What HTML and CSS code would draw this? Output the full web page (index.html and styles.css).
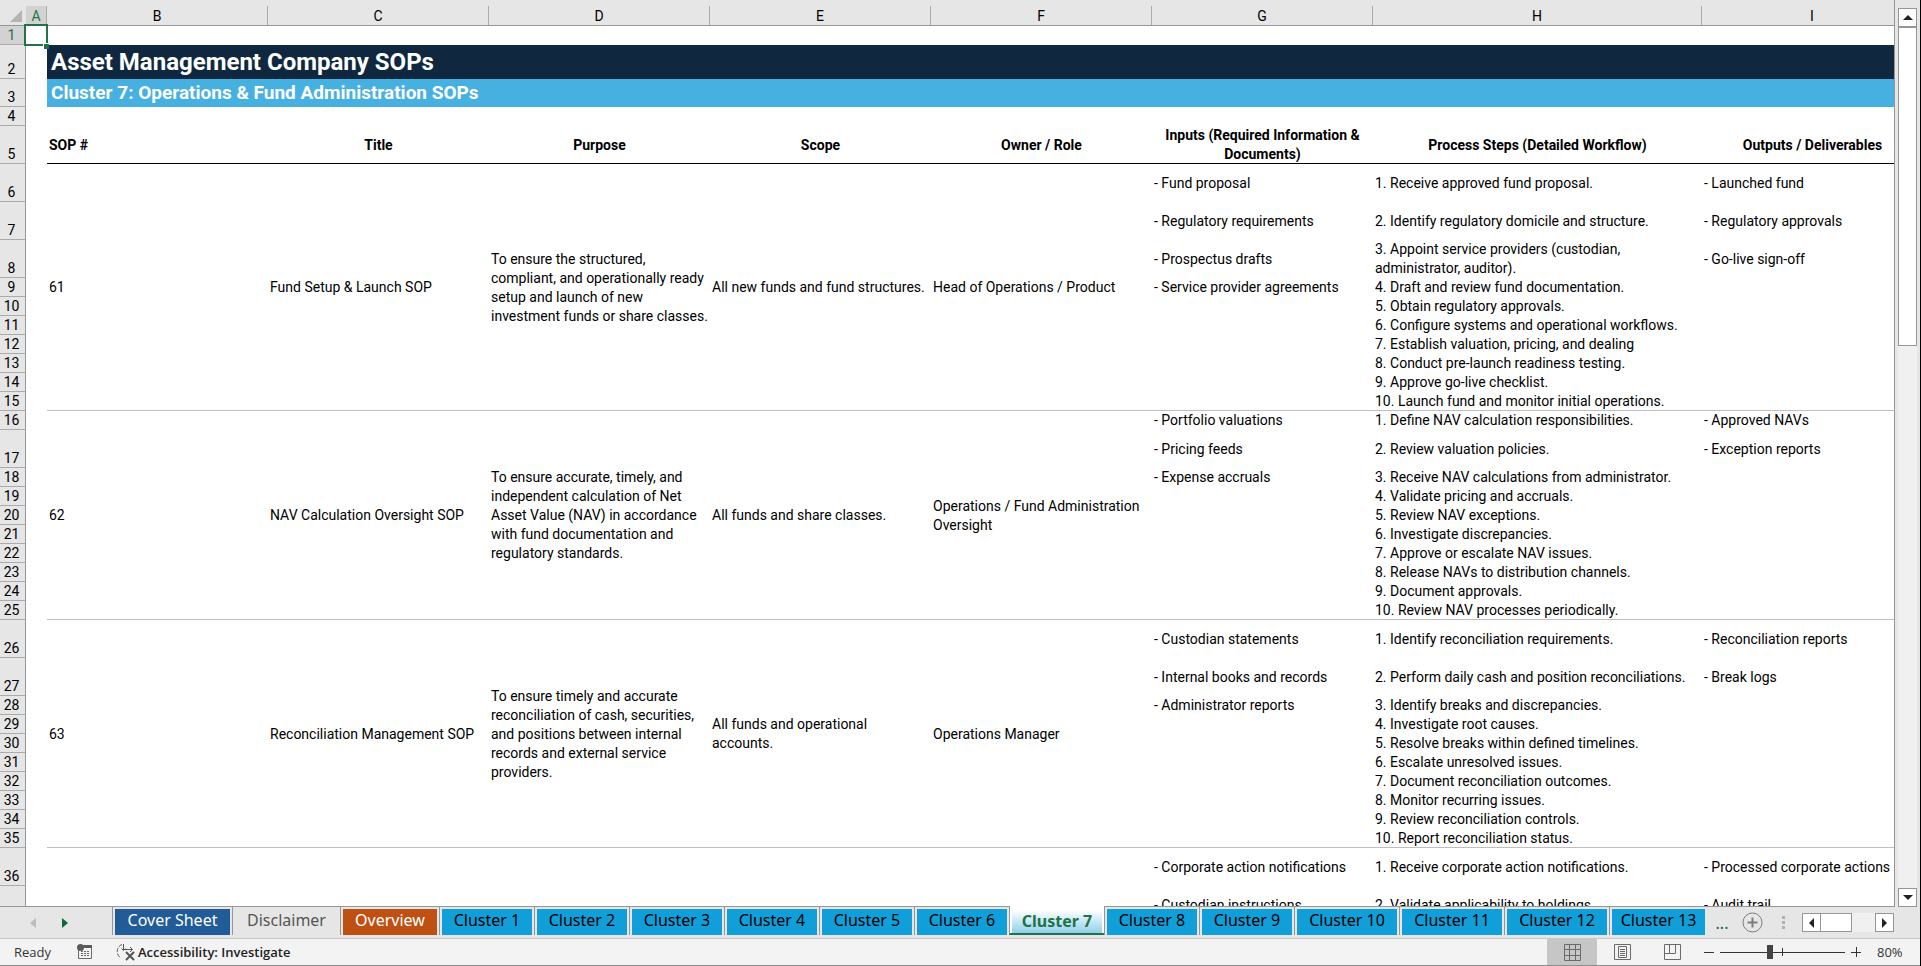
FILE: index.html
```html
<!DOCTYPE html>
<html lang="en">
<head>
<meta charset="utf-8">
<title>Asset Management Company SOPs</title>
<link rel="stylesheet" href="styles.css">
</head>
<body>
<div class="app">
	<div class="work">
		<div class="grid">
			<table class="sheet">
				<colgroup>
					<col class="col-num">
					<col class="col-a">
					<col class="col-std"><col class="col-std"><col class="col-std"><col class="col-std"><col class="col-std"><col class="col-std">
					<col class="col-steps">
					<col class="col-std">
				</colgroup>
				<thead>
					<tr>
						<th class="corner"><svg width="12" height="12" viewBox="0 0 12 12"><path d="M12 0v12H0z" fill="#b4b4b4"/></svg></th>
						<th class="on"><span>A</span></th>
						<th><span>B</span></th><th><span>C</span></th><th><span>D</span></th><th><span>E</span></th><th><span>F</span></th><th><span>G</span></th><th><span>H</span></th><th><span>I</span></th>
					</tr>
				</thead>
				<tbody>
					<tr><th class="on">1</th><td class="cursor"></td><td colspan="8"></td></tr>
					<tr class="title"><th>2</th><td></td><td class="band" colspan="8">Asset Management Company SOPs</td></tr>
					<tr class="subtitle"><th>3</th><td></td><td class="band" colspan="8">Cluster 7: Operations &amp; Fund Administration SOPs</td></tr>
					<tr><th>4</th><td></td><td colspan="8"></td></tr>
					<tr class="tall heads"><th>5</th><td></td><td class="first">SOP #</td><td>Title</td><td>Purpose</td><td>Scope</td><td>Owner / Role</td><td>Inputs (Required Information &amp; Documents)</td><td>Process Steps (Detailed Workflow)</td><td>Outputs / Deliverables</td></tr>

					<tr class="tall"><th>6</th><td></td>
						<td class="m" rowspan="10">61</td>
						<td class="m" rowspan="10">Fund Setup &amp; Launch SOP</td>
						<td class="m" rowspan="10">To ensure the structured,<br>compliant, and operationally ready<br>setup and launch of new<br>investment funds or share classes.</td>
						<td class="m" rowspan="10">All new funds and fund structures.</td>
						<td class="m" rowspan="10">Head of Operations / Product</td>
						<td>- Fund proposal</td><td>1. Receive approved fund proposal.</td><td>- Launched fund</td></tr>
					<tr class="tall"><th>7</th><td></td><td>- Regulatory requirements</td><td>2. Identify regulatory domicile and structure.</td><td>- Regulatory approvals</td></tr>
					<tr class="tall"><th>8</th><td></td><td>- Prospectus drafts</td><td>3. Appoint service providers (custodian,<br>administrator, auditor).</td><td>- Go-live sign-off</td></tr>
					<tr><th>9</th><td></td><td>- Service provider agreements</td><td>4. Draft and review fund documentation.</td><td></td></tr>
					<tr><th>10</th><td></td><td></td><td>5. Obtain regulatory approvals.</td><td></td></tr>
					<tr><th>11</th><td></td><td></td><td>6. Configure systems and operational workflows.</td><td></td></tr>
					<tr><th>12</th><td></td><td></td><td>7. Establish valuation, pricing, and dealing</td><td></td></tr>
					<tr><th>13</th><td></td><td></td><td>8. Conduct pre-launch readiness testing.</td><td></td></tr>
					<tr><th>14</th><td></td><td></td><td>9. Approve go-live checklist.</td><td></td></tr>
					<tr class="last"><th>15</th><td></td><td></td><td>10. Launch fund and monitor initial operations.</td><td></td></tr>

					<tr><th>16</th><td></td>
						<td class="m" rowspan="10">62</td>
						<td class="m" rowspan="10">NAV Calculation Oversight SOP</td>
						<td class="m" rowspan="10">To ensure accurate, timely, and<br>independent calculation of Net<br>Asset Value (NAV) in accordance<br>with fund documentation and<br>regulatory standards.</td>
						<td class="m" rowspan="10">All funds and share classes.</td>
						<td class="m" rowspan="10">Operations / Fund Administration<br>Oversight</td>
						<td>- Portfolio valuations</td><td>1. Define NAV calculation responsibilities.</td><td>- Approved NAVs</td></tr>
					<tr class="tall"><th>17</th><td></td><td>- Pricing feeds</td><td>2. Review valuation policies.</td><td>- Exception reports</td></tr>
					<tr><th>18</th><td></td><td>- Expense accruals</td><td>3. Receive NAV calculations from administrator.</td><td></td></tr>
					<tr><th>19</th><td></td><td></td><td>4. Validate pricing and accruals.</td><td></td></tr>
					<tr><th>20</th><td></td><td></td><td>5. Review NAV exceptions.</td><td></td></tr>
					<tr><th>21</th><td></td><td></td><td>6. Investigate discrepancies.</td><td></td></tr>
					<tr><th>22</th><td></td><td></td><td>7. Approve or escalate NAV issues.</td><td></td></tr>
					<tr><th>23</th><td></td><td></td><td>8. Release NAVs to distribution channels.</td><td></td></tr>
					<tr><th>24</th><td></td><td></td><td>9. Document approvals.</td><td></td></tr>
					<tr class="last"><th>25</th><td></td><td></td><td>10. Review NAV processes periodically.</td><td></td></tr>

					<tr class="tall"><th>26</th><td></td>
						<td class="m" rowspan="10">63</td>
						<td class="m" rowspan="10">Reconciliation Management SOP</td>
						<td class="m" rowspan="10">To ensure timely and accurate<br>reconciliation of cash, securities,<br>and positions between internal<br>records and external service<br>providers.</td>
						<td class="m" rowspan="10">All funds and operational<br>accounts.</td>
						<td class="m" rowspan="10">Operations Manager</td>
						<td>- Custodian statements</td><td>1. Identify reconciliation requirements.</td><td>- Reconciliation reports</td></tr>
					<tr class="tall"><th>27</th><td></td><td>- Internal books and records</td><td>2. Perform daily cash and position reconciliations.</td><td>- Break logs</td></tr>
					<tr><th>28</th><td></td><td>- Administrator reports</td><td>3. Identify breaks and discrepancies.</td><td></td></tr>
					<tr><th>29</th><td></td><td></td><td>4. Investigate root causes.</td><td></td></tr>
					<tr><th>30</th><td></td><td></td><td>5. Resolve breaks within defined timelines.</td><td></td></tr>
					<tr><th>31</th><td></td><td></td><td>6. Escalate unresolved issues.</td><td></td></tr>
					<tr><th>32</th><td></td><td></td><td>7. Document reconciliation outcomes.</td><td></td></tr>
					<tr><th>33</th><td></td><td></td><td>8. Monitor recurring issues.</td><td></td></tr>
					<tr><th>34</th><td></td><td></td><td>9. Review reconciliation controls.</td><td></td></tr>
					<tr class="last"><th>35</th><td></td><td></td><td>10. Report reconciliation status.</td><td></td></tr>

					<tr class="tall"><th>36</th><td></td><td></td><td></td><td></td><td></td><td></td><td>- Corporate action notifications</td><td>1. Receive corporate action notifications.</td><td>- Processed corporate actions</td></tr>
					<tr class="tall"><th></th><td></td><td></td><td></td><td></td><td></td><td></td><td>- Custodian instructions</td><td>2. Validate applicability to holdings.</td><td>- Audit trail</td></tr>
				</tbody>
			</table>
		</div>
		<div class="vscroll">
			<button class="arrow" aria-label="Scroll up"><svg width="10" height="5" viewBox="0 0 10 5"><path d="M5 0l5 5H0z"/></svg></button>
			<div class="vtrack"><div class="vthumb"></div></div>
			<button class="arrow" aria-label="Scroll down"><svg width="10" height="5" viewBox="0 0 10 5"><path d="M0 0h10L5 5z"/></svg></button>
		</div>
	</div>

	<div class="tabbar">
		<div class="nav">
			<button aria-label="Previous sheet"><svg width="6" height="10" viewBox="0 0 6 10"><path d="M6 0v10L0 5z" fill="#bdbdbd"/></svg></button>
			<button aria-label="Next sheet"><svg width="6" height="10" viewBox="0 0 6 10"><path d="M0 0v10l6-5z" fill="#0e6837"/></svg></button>
		</div>
		<div class="tabs">
			<button class="tab cover"><span>Cover Sheet</span></button>
			<button class="tab plain"><span>Disclaimer</span></button>
			<button class="tab overview"><span>Overview</span></button>
			<button class="tab"><span>Cluster 1</span></button>
			<button class="tab"><span>Cluster 2</span></button>
			<button class="tab"><span>Cluster 3</span></button>
			<button class="tab"><span>Cluster 4</span></button>
			<button class="tab"><span>Cluster 5</span></button>
			<button class="tab"><span>Cluster 6</span></button>
			<button class="tab active"><span>Cluster 7</span></button>
			<button class="tab"><span>Cluster 8</span></button>
			<button class="tab"><span>Cluster 9</span></button>
			<button class="tab wide"><span>Cluster 10</span></button>
			<button class="tab wide"><span>Cluster 11</span></button>
			<button class="tab wide"><span>Cluster 12</span></button>
			<button class="tab cut"><span>Cluster 13</span></button>
		</div>
		<button class="more">...</button>
		<button class="add" aria-label="New sheet"><svg width="21" height="21" viewBox="0 0 21 21" fill="none" stroke="#7d7d7d"><circle cx="10.5" cy="10.5" r="9.5"/><path d="M10.5 5.500v10M5.500 10.500h10" stroke-width="2"/></svg></button>
		<svg class="grip" width="3" height="14" viewBox="0 0 3 14" fill="#b0b0b0"><path d="M0 0h3v3H0zM0 5h3v3H0zM0 10h3v3H0z"/></svg>
		<div class="hscroll">
			<button class="arrow" aria-label="Scroll left"><svg width="5" height="10" viewBox="0 0 5 10"><path d="M5 0v10L0 5z"/></svg></button>
			<div class="htrack"><div class="hthumb"></div></div>
			<button class="arrow" aria-label="Scroll right"><svg width="5" height="10" viewBox="0 0 5 10"><path d="M0 0v10l5-5z"/></svg></button>
		</div>
	</div>

	<div class="status">
		<span class="ready">Ready</span>
		<svg class="macro" width="16" height="16" viewBox="0 0 16 16"><path d="M6 1h9v3H6z" fill="#5a5a5a"/><path d="M1.500 6v8.500h13V4" fill="none" stroke="#6a6a6a"/><circle cx="3.500" cy="3.500" r="3.500" fill="#5a5a5a"/><path d="M4 7.500h2M7 7.500h2M10 7.500h2M4 9.500h2M7 9.500h2M10 9.500h2M4 11.500h2M7 11.500h2M10 11.500h2" stroke="#6a6a6a"/></svg>
		<button class="access"><svg width="20" height="18" viewBox="0 0 20 18" fill="none" stroke="#555"><path d="M6 1.500A7.500 7.500 0 0 0 5 15" stroke-dasharray="4 1.500"/><path d="M7.500 1v6M5.500 5.500l2 2 2-2M8 6.500h8M14 4l2.500 2.500L14 9"/><path d="M10 9l8 8M18 9l-8 8" stroke-width="2"/></svg>Accessibility: Investigate</button>
		<div class="views">
			<button class="view on" aria-label="Normal"><svg width="17" height="17" viewBox="0 0 17 17" fill="none" stroke="#6a6a6a"><path d="M.5.5h16v16H.5zM.5 5.500h16M.5 11.500h16M5.500.5v16M11.500.5v16"/></svg></button>
			<button class="view" aria-label="Page layout"><svg width="17" height="16" viewBox="0 0 17 16" fill="none" stroke="#6a6a6a"><path d="M.5.5h16v15H.5zM4.500 2.500h8v11h-8zM6 5.500h5M6 7.500h5M6 9.500h5M6 11.500h5"/></svg></button>
			<button class="view" aria-label="Page break preview"><svg width="17" height="16" viewBox="0 0 17 16" fill="none" stroke="#6a6a6a"><path d="M.5.5h16v15H.5zM5.500.5v9M11.500.5v9M.5 9.500h11"/></svg></button>
		</div>
		<button class="zoom-btn" aria-label="Zoom out"><svg width="10" height="10" viewBox="0 0 10 10" stroke="#333"><path d="M0 5.500h10"/></svg></button>
		<input class="zoom" type="range" min="10" max="190" value="81" aria-label="Zoom">
		<button class="zoom-btn" aria-label="Zoom in"><svg width="10" height="10" viewBox="0 0 10 10" stroke="#333"><path d="M0 5.500h10M5.500 0v10"/></svg></button>
		<span class="percent">80%</span>
	</div>
</div>
</body>
</html>
```

FILE: styles.css
```css
body, table, th, td, button, input {margin:0; padding:0;}
*, :before, :after {box-sizing:border-box;}
button {border:0; background:none; font:inherit; color:inherit;}
svg {display:block;}

body {font-family:Roboto, "Liberation Sans", sans-serif; font-size:14px; color:#000; background:#e6e6e6;}
.app {display:flex; flex-direction:column; height:100vh; overflow:hidden; border-right:1px solid #000;}

/* grid */
.work {display:flex; flex:1; min-height:0;}
.grid {flex:1; min-width:0; overflow:hidden; border-right:1px solid #969696; border-bottom:1px solid #969696;}
.sheet {width:1923px; table-layout:fixed; border-collapse:separate; border-spacing:0; background:#fff;}
.col-num {width:26px;}
.col-a {width:21px;}
.col-std {width:221px;}
.col-steps {width:329px;}

.sheet tr {height:19px;}
.sheet .tall {height:38px;}
.sheet .title {height:34px;}
.sheet .subtitle {height:28px;}
.sheet td {padding:0 2px; line-height:18px; white-space:nowrap; vertical-align:middle;}
.sheet td:not(:empty) {line-height:19px;}

.sheet thead tr {height:26px;}
.sheet thead th {padding-top:6px; background:#e6e6e6; border-bottom:1px solid #969696; font-weight:normal;}
.sheet thead span {display:block; height:19px; line-height:20px; border-right:1px solid #ababab;}
.sheet thead .on span {background:#d2d2d2; color:#217346;}
.sheet .corner svg {margin-left:10px;}
.sheet tbody th {padding:0 2px 0 0; line-height:18px; background:#e6e6e6; border-right:1px solid #969696; border-bottom:1px solid #ababab; font-weight:normal; vertical-align:bottom;}
.sheet tbody .on {background:#d2d2d2; color:#217346;}

.cursor {position:relative;}
.cursor:before {content:""; position:absolute; top:-2px; left:-2px; width:24px; height:22px; border:2px solid #217346;}
.cursor:after {content:""; position:absolute; top:17px; left:17px; width:6px; height:6px; background:#217346; border:1px solid #fff; border-width:1px 0 0 1px;}

.sheet .band {padding:0 4px; color:#fff; font-weight:bold;}
.sheet .title .band {background:#0f2840; font-size:24px; line-height:34px;}
.sheet .subtitle .band {background:#46b1e1; font-size:19px; line-height:26px;}

/* rules under the cells are shadows so that they add nothing to the row height */
.heads td {font-weight:bold; text-align:center;}
.heads td + td {box-shadow:inset 0 -1px #000;}
.sheet .heads td:nth-child(n+4) {white-space:normal;}
.sheet .heads .first {text-align:left;}
.last td + td, .sheet .m {box-shadow:inset 0 -1px #bfbfbf;}

/* scroll bars */
.arrow {display:flex; align-items:center; justify-content:center; background:#fff; border:1px solid #969696; fill:#222;}
.vscroll {display:flex; flex-direction:column; width:25px; padding:8px 3px 0 3px;}
.vscroll .arrow {height:19px;}
.vtrack {flex:1; background:#f0f0f0;}
.vthumb {height:319px; background:#fff; border:1px solid #969696;}

/* sheet tabs */
.tabbar {display:flex; align-items:center; height:32px; font-family:"Noto Sans", sans-serif; border-bottom:1px solid #c6c6c6;}
.nav {display:flex; gap:26px; width:112px; padding-left:30px;}
.tabs {display:flex; align-self:flex-start; flex:none;}
.tab {width:95px; height:28px; padding:2px 2px 0; border-left:1px solid #969696; font-size:16px;}
.tab span {display:block; height:26px; line-height:22px; background:#119fda; color:#000;}
.more {width:34px; color:#0e6837; font-size:16px;}
.add {margin-left:3px;}
.grip {margin-left:19px;}
.hscroll {display:flex; margin-left:17px; height:19px;}
.hscroll .arrow {width:19px;}
.htrack {width:54px; background:#f0f0f0;}
.hthumb {width:31px; height:19px; background:#fff; border:1px solid #969696; border-left:0;}
.tab.cover {width:120px;}
.cover span {background:#215c98; color:#fff;}
.tab.plain {width:108px;}
.plain span {background:none; color:#555;}
.tab.overview {width:99px;}
.overview span {background:#be5014; color:#fff;}
.tab.wide {width:105px;}
.tab.cut {width:96px; padding-right:0;}
.tab.active {height:29px; margin-top:-1px; padding-top:3px; background:#fff; border-bottom:2px solid #217346; font-weight:bold;}
.active span {height:23px; background:linear-gradient(#fff, #8fd0ec); color:#217346;}

/* status bar */
.status {display:flex; align-items:center; height:27px; background:#f3f3f3; border-bottom:1px solid #8c8c8c; font-family:"Open Sans", "Noto Sans", sans-serif; font-size:13px; color:#333;}
.ready {width:77px; padding-left:14px;}
.access {display:flex; align-items:center; gap:2px; margin-left:23px; font-weight:600; color:#222;}
.views {display:flex; align-self:stretch; margin-left:auto; margin-right:7px;}
.view {display:flex; align-items:center; justify-content:center; width:50px;}
.view.on {background:#c6c6c6;}
.zoom {-webkit-appearance:none; appearance:none; width:125px; height:18px; margin:0 6px; background:linear-gradient(#333, #333) center / 100% 1px no-repeat, linear-gradient(#333, #333) center / 1px 8px no-repeat;}
.zoom::-webkit-slider-thumb {-webkit-appearance:none; width:6px; height:14px; background:#444;}
.percent {width:59px; padding-left:16px;}
```
